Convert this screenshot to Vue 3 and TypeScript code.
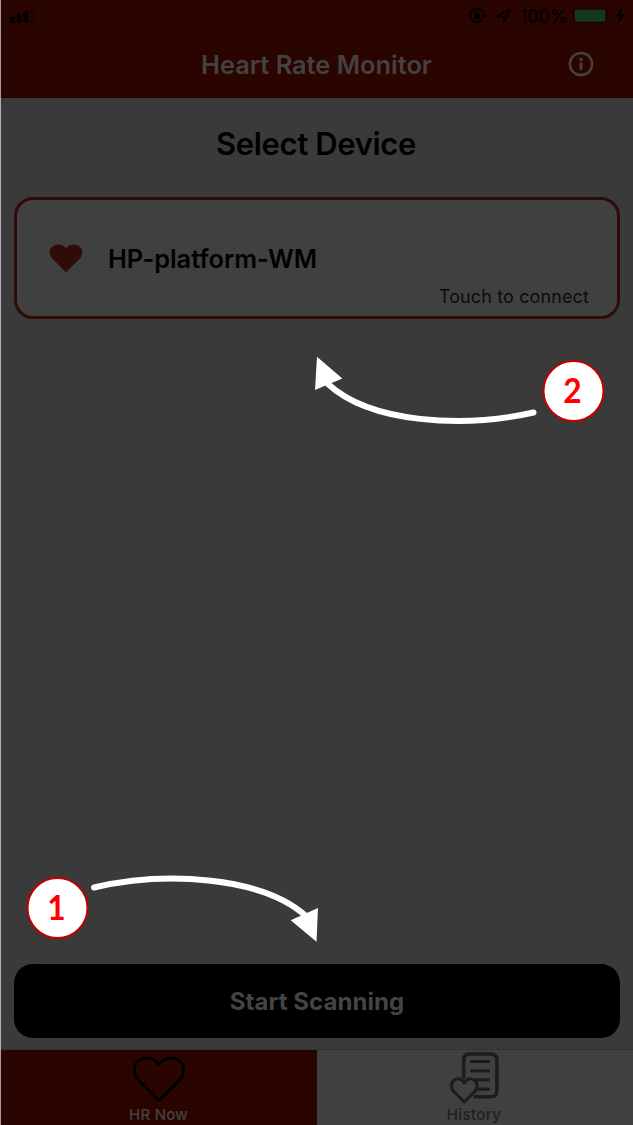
<script setup lang="ts">
interface Step { id: number; x: number; y: number }
const steps: Step[] = [
  { id: 2, x: 573.5, y: 391 },
  { id: 1, x: 57.5, y: 908 },
]
const bars: number[] = [6.5, 9, 12, 14.5]
</script>

<template>
  <div class="screen">
    <header class="header">
      <div class="status">
        <svg class="signal" width="30" height="16" viewBox="0 0 30 16">
          <rect v-for="(h, i) in bars" :key="i" :x="i * 6.6" :y="15 - h" width="5" :height="h" rx="1.8" :fill="i === 3 ? '#200400' : '#000'" />
        </svg>
        <div class="status-right">
          <svg width="50" height="22" viewBox="0 0 50 22" fill="none" stroke="#000" stroke-width="1.5">
            <path d="M12.8 14.9A6.8 6.8 0 1 1 14.6 9.5" />
            <path d="M12 9.8h6l-3 4z" fill="#000" stroke="none" />
            <rect x="5" y="9.4" width="6.2" height="4.8" rx=".6" fill="#000" stroke="none" />
            <path d="M6.4 10V8.4a1.7 1.7 0 0 1 3.4 0V10" stroke-width="1.1" />
            <path d="M28.2 11.2L41.2 4.6L35.2 17.2L34.7 11.6Z" stroke-linejoin="round" stroke-width="1.5" />
          </svg>
          <span class="percent">100%</span>
          <svg class="battery" width="56" height="18" viewBox="0 0 56 18">
            <rect x="1" y="1" width="34" height="15" rx="4" fill="none" stroke="#1b0302" stroke-width="1.5" />
            <rect x="2.8" y="2.8" width="30.4" height="11.6" rx="1.8" fill="#12391b" />
            <path d="M37.4 6q2.2 2.5 0 5z" fill="#1b0302" />
            <path d="M50.2 .8L43.8 9.4H47.7L46 16.4L53.2 7.2H49Z" fill="#000" />
          </svg>
        </div>
      </div>
      <div class="title-bar">
        <h1>Heart Rate Monitor</h1>
        <svg class="info" width="26" height="26" viewBox="0 0 26 26">
          <circle cx="13" cy="13" r="11.1" fill="none" stroke="#454141" stroke-width="2.5" />
          <circle cx="13" cy="8.5" r="1.7" fill="#454141" />
          <path d="M13 12.8v4.8" stroke="#454141" stroke-width="3" stroke-linecap="round" />
        </svg>
      </div>
    </header>

    <main class="content">
      <h2>Select Device</h2>
      <section class="card">
        <svg class="heart" width="34" height="30" viewBox="0 0 34 30">
          <path d="M17 28.2L3.2 14.6C-.3 10.8 .1 5.3 3.4 2.6C7.6-.7 13.4.1 17 4.2C20.6.1 26.4-.7 30.6 2.6C33.9 5.3 34.3 10.8 30.8 14.6Z" fill="#2f0c08" />
        </svg>
        <strong>HP-platform-WM</strong>
        <span class="hint">Touch to connect</span>
      </section>
      <button class="scan" type="button">Start Scanning</button>
    </main>

    <nav class="tabs">
      <div class="tab active">
        <svg width="54" height="48" viewBox="0 0 54 48" fill="none" stroke="#000" stroke-width="2.8" stroke-linejoin="round">
          <path d="M27 44.4L7 24.6C.1 17.4 1.5 7.2 8.3 3.6C15-.1 22.5 2.3 27 8.3C31.5 2.3 39-.1 45.7 3.6C52.5 7.2 53.9 17.4 47 24.6Z" />
        </svg>
        <span>HR Now</span>
      </div>
      <div class="tab history">
        <svg width="52" height="54" viewBox="0 0 52 54" fill="none" stroke="#1c1c1c" stroke-width="3.5" stroke-linecap="round" stroke-linejoin="round">
          <path d="M14.7 26V9Q14.7 3 20.7 3H41.7Q47.9 3 47.9 9V39.8Q47.9 45.8 41.7 45.8H26" />
          <path d="M22.5 10.5h17M22.5 19.8h17M26.5 28.8h13M29.5 38.1h10" stroke-width="3.2" />
          <path d="M15.3 51L5 40.8C1.3 36.9 1.9 31.5 5.4 29C9.1 26.4 13.4 28 15.3 32C17.2 28 21.5 26.4 25.2 29C28.7 31.5 29.3 36.9 25.6 40.8Z" fill="#404040" stroke-width="3" />
        </svg>
        <span>History</span>
      </div>
    </nav>

    <div class="edge"></div>
    <svg class="guide" width="633" height="1125" viewBox="0 0 633 1125">
      <g fill="none" stroke="#fff" stroke-width="6" stroke-linecap="round">
        <path d="M533.5 412.5C463 428.5 370 423 328 384" />
        <path d="M94 887.5C166 870.5 263 877 306 916" />
      </g>
      <path d="M317 356.7L342.3 378.5L315 390Z" fill="#fff" />
      <path d="M316.5 941.7L290.7 920.3L318 908Z" fill="#fff" />
      <g v-for="step in steps" :key="step.id">
        <circle :cx="step.x" :cy="step.y" r="30" fill="#fff" stroke="#c00000" stroke-width="2" />
        <text class="digit" :x="step.x - 1" :y="step.y + 12" text-anchor="middle" textLength="18.4" lengthAdjust="spacingAndGlyphs">{{ step.id }}</text>
      </g>
    </svg>
  </div>
</template>

<style>
body { margin: 0; background: #3a3a3a; }
</style>

<style scoped>
.screen { position: relative; width: 633px; height: 1125px; display: flex; flex-direction: column; overflow: hidden; background: #3a3a3a; font-family: Inter, "Liberation Sans", sans-serif; }
.header { height: 98px; flex: none; background: #2a0500; }
.status { height: 32px; display: flex; justify-content: space-between; }
.signal { margin: 8px 0 0 10px; }
.status-right { display: flex; align-items: flex-start; padding-top: 5px; margin-right: 5px; }
.percent { width: 51px; margin: 1px 0 0 1px; font-size: 18px; line-height: 22px; letter-spacing: -.1px; white-space: nowrap; color: #000; }
.battery { margin: 2px 0 0 1px; }
.title-bar { height: 66px; display: grid; grid-template-columns: 1fr auto 1fr; align-items: start; }
h1 { grid-column: 2; margin: 17px 0 0; font-size: 25.3px; line-height: 32px; font-weight: 600; letter-spacing: .03px; color: #454141; white-space: nowrap; }
.info { justify-self: end; margin: 19px 39px 0 0; }
.content { flex: 1; display: flex; flex-direction: column; padding: 0 13px 0 14px; }
h2 { margin: 26px 2px 0 0; text-align: center; font-size: 31px; line-height: 40px; font-weight: 600; letter-spacing: -.36px; color: #000; }
.card { box-sizing: border-box; height: 122px; margin-top: 33px; border: 3px solid #2f0c08; border-radius: 19px; background: #404040; display: grid; grid-template-columns: 34px 1fr auto; padding: 0 28px 0 32px; }
.heart { margin-top: 44px; }
.card strong { margin: 43px 0 0 25px; font-size: 25.3px; line-height: 32px; font-weight: 600; color: #000; white-space: nowrap; }
.hint { margin-top: 85px; font-size: 18px; line-height: 24px; letter-spacing: .12px; color: #0c0c0c; white-space: nowrap; }
.scan { height: 74px; margin: auto 0 11px; padding: 2px 0 0; border: 0; border-radius: 19px; background: #000; color: #444; font: 700 24px/30px Inter, sans-serif; letter-spacing: .05px; }
.tabs { height: 76px; box-sizing: border-box; flex: none; display: grid; grid-template-columns: 317px 316px; border-top: 1px solid #323232; }
.tab { display: flex; flex-direction: column; align-items: center; font-size: 15px; line-height: 20px; font-weight: 500; background: #404040; color: #202020; }
.tab svg { flex: none; margin-top: 6px; }
.tab.active { background: #2a0500; color: #454141; }
.tab.history { padding-right: 2px; }
.tab.history svg { margin: 1px 0 0 1px; }
.tab.active span { padding-top: 1px; }
.tab span { letter-spacing: .25px; }
.tab.history span { letter-spacing: .4px; }
.edge { position: absolute; left: 0; top: 0; width: 1px; height: 1125px; background: rgba(255, 255, 255, .6); }
.guide { position: absolute; left: 0; top: 0; }
.digit { font-family: Lato, sans-serif; font-size: 35px; font-weight: 700; fill: #f00; }
</style>
